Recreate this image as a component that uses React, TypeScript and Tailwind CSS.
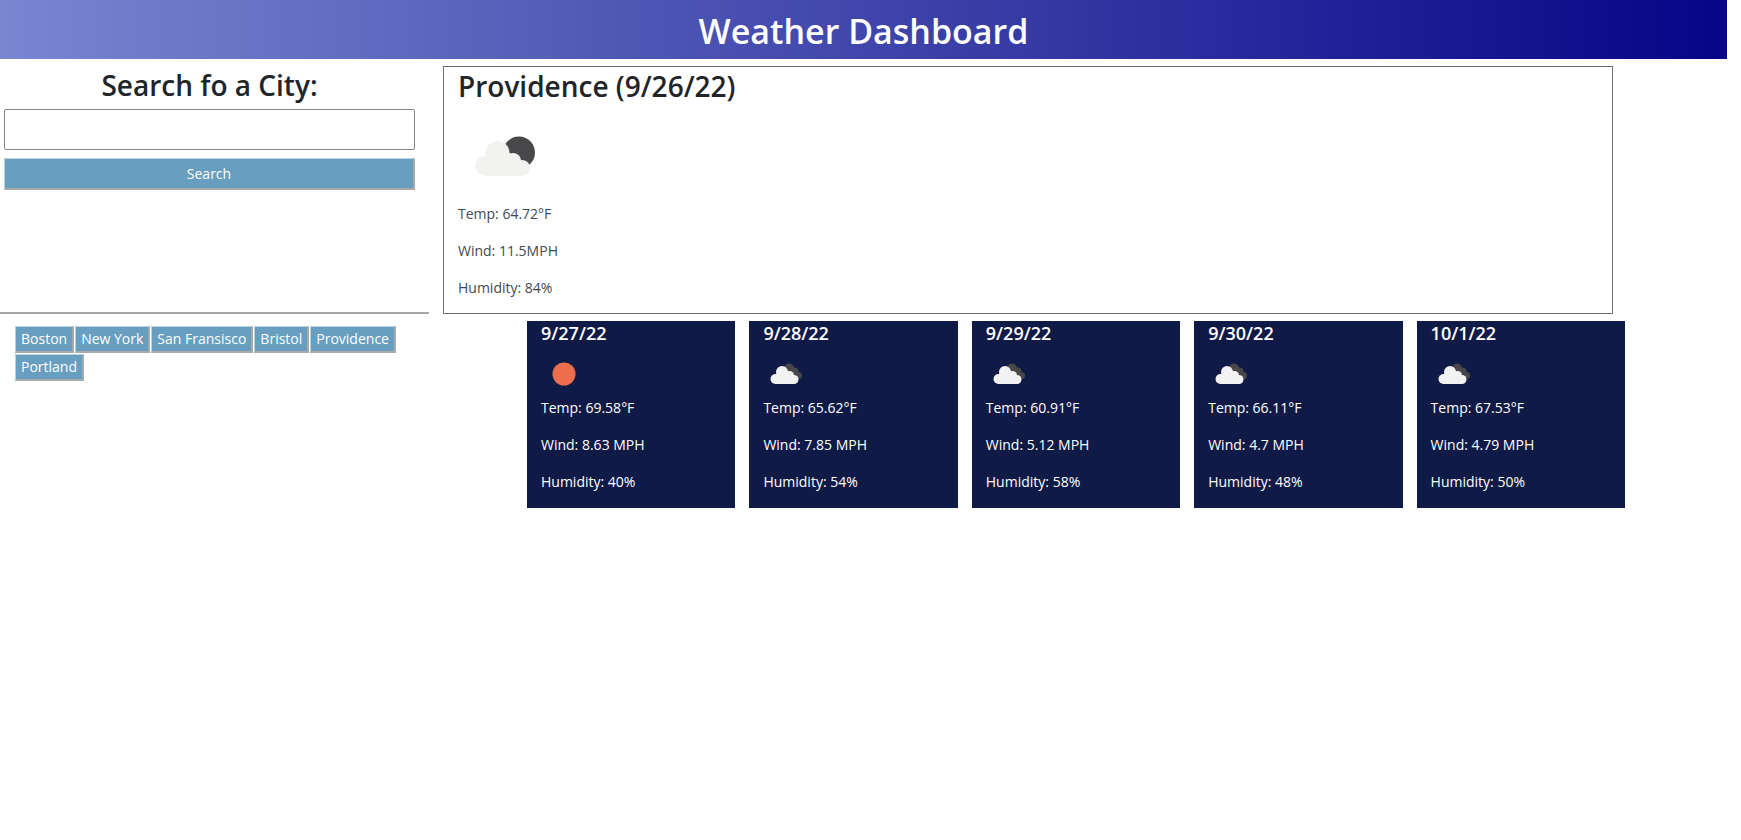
const days = [
  { date: '9/27/22', icon: 'sun', temp: '69.58', wind: '8.63', humidity: 40 },
  { date: '9/28/22', icon: 'clouds', temp: '65.62', wind: '7.85', humidity: 54 },
  { date: '9/29/22', icon: 'clouds', temp: '60.91', wind: '5.12', humidity: 58 },
  { date: '9/30/22', icon: 'clouds', temp: '66.11', wind: '4.7', humidity: 48 },
  { date: '10/1/22', icon: 'clouds', temp: '67.53', wind: '4.79', humidity: 50 },
];

const cities = ['Boston', 'New York', 'San Fransisco', 'Bristol', 'Providence', 'Portland'];

const bevel =
  'border-t border-l border-r-2 border-b-2 border-t-[#b8d3e0] border-l-[#b8d3e0] border-r-[#a9a9a9] border-b-[#a9a9a9] bg-[#689ebf] text-white';

function NightCloudIcon() {
  return (
    <svg viewBox="0 0 100 98" className="h-[98px] w-[100px]" aria-hidden="true">
      <circle cx="61" cy="47.5" r="16" fill="#48484a" />
      <g fill="#f2f2f1">
        <circle cx="27" cy="61" r="10" />
        <circle cx="39.5" cy="48" r="12" />
        <circle cx="55" cy="56" r="8" />
        <circle cx="64" cy="63" r="8" />
        <path d="M27 71V54l8-6h17l9 10 3 13z" />
      </g>
    </svg>
  );
}

function CloudsIcon() {
  return (
    <svg viewBox="0 0 50 48" className="h-12 w-[50px]" aria-hidden="true">
      <g fill="#48484a">
        <circle cx="26" cy="19.5" r="5" />
        <circle cx="31.5" cy="22.5" r="4" />
        <circle cx="35.5" cy="26.5" r="3.5" />
        <path d="M24 20h8l3 10H26z" />
      </g>
      <g fill="#f2f2f2">
        <circle cx="12.5" cy="30" r="5" />
        <circle cx="19" cy="23" r="6" />
        <circle cx="26.5" cy="26.5" r="4.5" />
        <circle cx="31" cy="30.5" r="4.5" />
        <path d="M12 35v-9l4-4h8l5 4 2 9z" />
      </g>
    </svg>
  );
}

function SunIcon() {
  return (
    <svg viewBox="0 0 50 48" className="h-12 w-[50px]" aria-hidden="true">
      <circle cx="23" cy="25" r="11.5" fill="#ec6e4c" />
    </svg>
  );
}

export default function App() {
  return (
    <div className="bg-white pr-3.5 font-['Open_Sans','Noto_Sans',sans-serif] text-sm text-[#212529]">
      <header className="flex h-[59px] items-center justify-center bg-linear-to-r/srgb from-[#7986d0] via-[#4046ab] to-[#060587] pt-0.5">
        <h1 className="text-[34px] leading-10 font-semibold text-white">Weather Dashboard</h1>
      </header>

      <div className="grid grid-cols-[429px_minmax(0,1fr)] gap-x-3.5">
        <form
          className="flex flex-col border-b-2 border-[#a6a6a6] pt-2 pr-3.5 pl-1"
          onSubmit={(e) => e.preventDefault()}
        >
          <label htmlFor="city" className="text-center text-[28px] leading-9 font-semibold">
            Search fo a City:
          </label>
          <input
            id="city"
            type="text"
            className="mt-1.5 h-[41px] w-full rounded-xs border border-[#858585] px-2"
          />
          <button type="submit" className={`mt-2 h-8 ${bevel}`}>
            Search
          </button>
        </form>

        <section className="mt-[7px] mr-[114px] flex flex-col border border-[#6c7073] px-3.5 pb-[15px]">
          <h2 className="text-[28px] leading-[38px] font-semibold">Providence (9/26/22)</h2>
          <NightCloudIcon />
          <div className="flex flex-col gap-4 leading-[21px] text-[#45494d]">
            <p>Temp: 64.72°F</p>
            <p>Wind: 11.5MPH</p>
            <p>Humidity: 84%</p>
          </div>
        </section>
      </div>

      <div className="grid grid-cols-[429px_minmax(0,1fr)] gap-x-3.5">
        <nav
          aria-label="Recent cities"
          className="flex flex-wrap content-start gap-px pt-3 pr-6 pl-[15px]"
        >
          {cities.map((city) => (
            <button key={city} type="button" className={`h-[27px] px-[5px] leading-5 ${bevel}`}>
              {city}
            </button>
          ))}
        </nav>

        <ul className="mt-[7px] mr-[102px] ml-[84px] grid grid-cols-5 gap-3.5">
          {days.map((day) => (
            <li key={day.date} className="flex flex-col bg-[#101a46] px-3.5 pb-4 text-white">
              <h3 className="mb-1 text-lg leading-6 font-semibold">{day.date}</h3>
              {day.icon === 'sun' ? <SunIcon /> : <CloudsIcon />}
              <div className="flex flex-col gap-4 leading-[21px]">
                <p>Temp: {day.temp}°F</p>
                <p>Wind: {day.wind} MPH</p>
                <p>Humidity: {day.humidity}%</p>
              </div>
            </li>
          ))}
        </ul>
      </div>
    </div>
  );
}
